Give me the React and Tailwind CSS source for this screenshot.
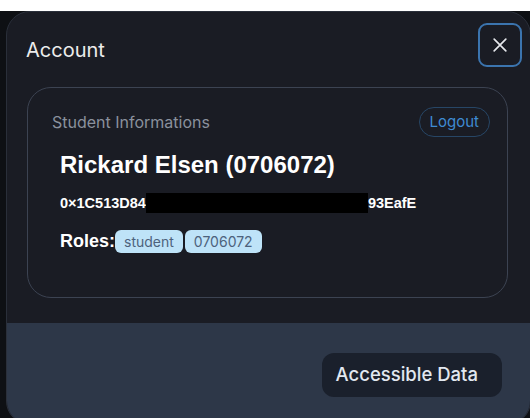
import React from "react";

const sans = "font-['Inter','Noto_Sans',sans-serif]";
const strong = "font-['Liberation_Sans','Arial',sans-serif]";

function CloseIcon() {
  return (
    <svg width="20" height="20" viewBox="0 0 24 24" fill="none" stroke="currentColor" strokeWidth="2" strokeLinecap="round">
      <path d="M5 5l14 14M19 5L5 19" />
    </svg>
  );
}

function Badge({ children }) {
  return (
    <span className={`${sans} inline-flex h-[23px] items-center rounded-[6px] bg-[#bee3f8] px-[9px] text-[14px] text-[#4d627c]`}>
      {children}
    </span>
  );
}

export default function App() {
  return (
    <div className="h-[418px] w-[530px] overflow-hidden bg-white">
      <div className="mt-[11px] h-[407px] bg-[#0e1014] pl-[6px]">
        <div className={`${sans} flex h-[414px] w-[525px] flex-col overflow-hidden rounded-[24px] border border-[#2a2f3a] bg-[#1a1c24]`}>
          {/* header */}
          <div className="flex items-start justify-between pl-[19px] pr-[8px] pt-[11px]">
            <h2 className="pt-[14px] text-[20px] leading-[26px] text-[#ececec]">Account</h2>
            <button className="flex h-[44px] w-[44px] items-center justify-center rounded-[9px] border-2 border-[#3b74ae] text-[#e6e8ec]">
              <CloseIcon />
            </button>
          </div>

          {/* body */}
          <div className="pl-[20px] pr-[22px] pt-[20px]">
            <div className="h-[211px] rounded-[24px] border border-[#3c4352] pl-[24px] pr-[17px] pt-[19px]">
              <div className="flex items-center justify-between">
                <span className="text-[16px] text-[#8a919d]">Student Informations</span>
                <span className="flex h-[30px] items-center rounded-full border border-[#274666] px-[10px] text-[15px] text-[#3f8bd3]">
                  Logout
                </span>
              </div>
              <div className="pl-[8px]">
                <div className={`${strong} mt-[12px] text-[24px] font-bold leading-[32px] text-white`}>
                  Rickard Elsen (0706072)
                </div>
                <div className={`${strong} mt-[12px] flex items-center text-[14.5px] font-bold leading-[20px] text-white`}>
                  <span>0×1C513D84</span>
                  <span className="h-[20px] w-[222px] bg-black" />
                  <span>93EafE</span>
                </div>
                <div className="mt-[16px] flex items-center">
                  <span className={`${strong} text-[18px] font-bold leading-[24px] text-white`}>Roles:</span>
                  <div className="flex gap-[2px]">
                    <Badge>student</Badge>
                    <Badge>0706072</Badge>
                  </div>
                </div>
              </div>
            </div>
          </div>

          {/* footer */}
          <div className="mt-[25px] flex flex-1 justify-end bg-[#2d3748] pr-[28px] pt-[30px]">
            <button className="h-[44px] rounded-[12px] bg-[#1a202c] pl-[14px] pr-[24px] text-[18.5px] font-medium text-[#e2e8f0]">
              Accessible Data
            </button>
          </div>
        </div>
      </div>
    </div>
  );
}
